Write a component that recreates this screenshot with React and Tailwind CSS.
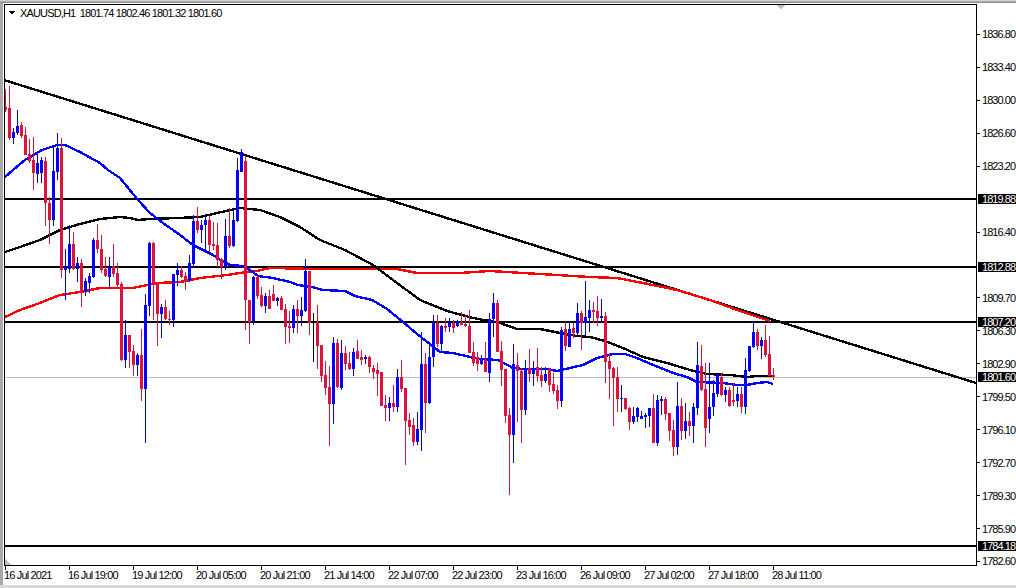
const C = [
[0,89,107,110,112],[0,86,108,138,140],[1,128,132,138,144],[1,110,126,133,135],[0,122,125,136,138],[0,127,135,155,155],[0,139,154,161,163],[0,137,160,173,190],[1,154,163,174,183],[1,157,160,173,183],
[0,157,161,203,226],[0,197,203,220,244],[1,146,171,220,226],[1,133,148,172,180],[0,138,148,270,278],[1,249,267,270,300],[1,225,244,269,273],[0,232,244,269,270],[1,257,263,269,282],[0,259,263,292,307],
[1,278,281,292,296],[1,273,276,283,293],[1,238,240,277,278],[0,224,240,249,253],[0,235,249,270,273],[0,257,269,276,277],[1,257,267,277,287],[0,244,266,274,277],[0,263,273,285,289],[0,282,284,360,361],
[1,320,335,360,368],[0,335,335,352,368],[0,345,351,365,376],[1,353,355,365,376],[0,329,355,389,401],[1,294,305,389,443],[1,242,243,306,316],[0,242,243,283,320],[0,282,283,314,346],[1,304,307,314,338],
[0,300,307,319,320],[0,311,319,320,325],[1,274,274,320,327],[1,263,270,275,286],[0,266,270,277,278],[0,272,276,281,290],[1,255,263,281,282],[1,215,221,264,267],[0,207,221,230,233],[1,220,225,230,243],
[1,215,220,225,250],[0,215,220,245,252],[0,222,244,246,250],[0,223,245,260,267],[0,258,259,267,279],[1,219,236,266,270],[0,208,236,246,248],[1,210,220,246,247],[1,158,170,221,222],[1,149,152,172,172],
[0,156,161,300,330],[0,300,300,322,344],[1,276,277,321,325],[0,276,277,296,299],[0,287,295,306,307],[1,293,296,306,313],[0,290,296,309,309],[0,285,294,301,301],[1,297,298,301,306],[0,296,298,310,310],
[0,304,309,327,344],[0,311,326,328,343],[1,305,309,328,333],[0,300,309,316,333],[1,297,310,316,326],[1,259,271,311,312],[0,271,271,323,335],[2,313,322,322,362],[0,305,322,346,369],[0,345,345,376,382],
[0,361,375,388,395],[0,366,387,404,446],[1,337,343,404,424],[0,339,343,387,388],[1,340,353,388,390],[0,346,353,364,370],[0,352,363,369,370],[1,348,352,369,376],[0,340,351,359,359],[0,350,357,360,365],
[1,355,357,359,364],[0,356,357,367,373],[0,365,368,372,379],[0,363,370,374,396],[0,372,372,406,406],[0,395,405,408,421],[1,397,403,408,421],[0,385,403,407,412],[1,369,377,407,412],[0,360,377,389,392],
[0,388,388,421,465],[0,413,420,427,435],[0,418,425,442,446],[1,412,429,442,445],[1,332,364,430,451],[0,353,364,403,433],[1,345,357,403,404],[1,315,323,357,367],[0,315,323,344,347],[1,325,326,344,351],
[0,318,326,328,332],[1,318,323,327,332],[0,320,323,328,333],[1,320,322,326,327],[0,312,322,325,325],[0,315,324,326,327],[0,310,326,353,353],[0,342,352,363,366],[0,352,357,364,371],[1,355,359,364,365],
[0,342,360,372,372],[1,313,319,373,382],[1,293,303,319,337],[0,300,303,352,352],[0,341,351,370,386],[0,369,369,416,423],[0,408,415,435,495],[1,344,364,435,463],[0,353,365,371,422],[0,368,371,410,443],
[1,360,369,410,415],[0,349,368,374,382],[1,361,368,374,386],[0,348,367,376,382],[0,367,375,381,387],[1,367,374,381,383],[0,368,369,385,392],[0,373,384,391,394],[0,385,390,401,409],[1,327,330,401,407],
[0,322,329,346,351],[1,322,329,347,347],[0,323,328,333,338],[1,303,313,333,335],[0,311,313,323,350],[1,281,317,323,335],[1,300,310,318,332],[0,302,310,312,323],[0,296,311,318,326],[1,299,316,318,323],
[0,312,316,362,383],[0,353,361,369,399],[0,367,368,378,426],[0,367,377,399,412],[1,385,398,399,412],[0,398,398,409,410],[0,407,408,422,430],[1,407,416,422,424],[1,407,408,417,422],[1,411,416,419,419],
[1,413,415,417,428],[1,408,408,416,427],[0,394,408,443,443],[1,395,400,443,446],[1,396,399,401,415],[0,397,399,414,420],[0,413,413,431,441],[0,420,430,447,456],[1,382,406,447,455],[0,398,406,431,440],
[1,403,421,431,439],[0,412,421,426,436],[1,403,407,426,443],[1,342,365,408,415],[0,345,366,390,391],[0,363,389,428,447],[1,363,407,419,433],[1,380,393,407,416],[1,374,375,394,397],[0,373,377,395,396],
[1,387,390,395,402],[0,387,390,406,407],[0,383,400,402,406],[1,387,394,401,407],[0,387,394,407,413],[1,358,370,407,414],[1,346,346,371,372],[1,322,332,347,348],[0,329,332,346,350],[1,337,340,346,359],
[0,325,340,355,357],[0,336,354,376,376],[0,368,375,377,380],
];
const FILL = ["#dc143c", "#0000ff", "#000000"];
const BLUE = "5,177 13,170 25,160 42,150 57,145 65,145 80,152 100,163 108,170 120,178 138,200 150,213 163,223 180,235 193,245 213,255 222,261 230,265 242,266 250,270 258,276 273,278 290,282 298,285 312,287 323,290 345,291 355,296 372,300 387,309 403,322 417,334 430,344 440,352 453,353 470,357 480,359 498,360 513,368 523,369 547,369 557,371 570,368 583,365 597,358 613,354 625,354 637,358 653,365 673,373 687,377 697,382 723,383 737,385 747,385 757,383 767,382 773,384";
const BLACK = "5,252 20,247 40,240 60,230 80,224 100,219 120,217 130,218 138,220 150,219 177,218 200,217 217,213 240,208 260,210 280,217 300,227 320,240 345,250 373,265 393,280 420,300 447,311 473,318 500,323 517,329 540,329 560,333 577,336 590,337 605,341 623,348 643,357 667,363 690,370 707,374 730,375 747,377 757,376 773,376";
const RED = "5,317 20,310 40,303 60,295 80,292 100,288 133,288 157,283 180,282 200,278 227,275 240,273 257,271 270,268 317,269 347,269 397,269 417,273 460,273 490,271 540,274 590,277 617,278 643,283 677,290 710,300 740,311 770,321";
const HLINES = [199, 267, 322, 546];
const PRICES = ["1836.80","1833.40","1830.00","1826.60","1823.20","","1816.40","","1809.70","1806.30","1802.90","1799.50","1796.10","1792.70","1789.30","1785.90","1782.60"];
const TAGS = [["1819.88",199],["1812.88",267],["1807.20",322],["1801.60",377],["1784.18",546]];
const TIMES = ["16 Jul 2021","16 Jul 19:00","19 Jul 12:00","20 Jul 05:00","20 Jul 21:00","21 Jul 14:00","22 Jul 07:00","22 Jul 23:00","23 Jul 16:00","26 Jul 09:00","27 Jul 02:00","27 Jul 18:00","28 Jul 11:00"];

function Chart() {
  return (
    <svg className="block w-[971px] h-[560px]" viewBox="5 5 971 560" shapeRendering="crispEdges">
      {HLINES.map((y) => <rect key={y} x="5" y={y - 1} width="971" height="2" fill="#000" />)}
      <rect x="5" y="377" width="971" height="1" fill="#c0c0c0" />
      <line x1="4" y1="80" x2="976" y2="383" stroke="#000" strokeWidth="2.4" />
      <polyline points={RED} fill="none" stroke="#ff0000" strokeWidth="2.4" />
      <polyline points={BLACK} fill="none" stroke="#000000" strokeWidth="2.4" />
      <polyline points={BLUE} fill="none" stroke="#0000ff" strokeWidth="2.4" />
      {C.map(([k, h, o, c, l], i) => (
        <g key={i} fill={FILL[k]}>
          <rect x={5 + 4 * i} y={h} width="1" height={l - h} />
          {k < 2 && <rect x={4 + 4 * i} y={o} width="3" height={Math.max(c - o, 1)} />}
        </g>
      ))}
      <polygon points="8,11 15,11 11.5,14.5" fill="#000" />
      <polygon points="776,5 785,5 780.5,9.5" fill="#c0c0c0" />
      <polygon points="5,559 5,565 11,565" fill="#c0c0c0" />
    </svg>
  );
}

export default function App() {
  return (
    <div className="w-[1016px] h-[588px] bg-white flex flex-col overflow-hidden text-[11px] leading-[11px] tracking-[-0.95px] text-black font-['Liberation_Sans',sans-serif]">
      <div className="h-[3px] bg-gradient-to-b from-[#e0e0e0] to-[#808080]" />
      <div className="flex-1 flex flex-col border-l-[3px] border-[#a9a9a9] pl-px pt-px">
        <div className="flex h-[562px]">
          <div className="relative w-[973px] h-[562px] border border-black">
            <Chart />
            <div className="absolute left-[15px] top-[3px] whitespace-pre tracking-[-0.85px]">XAUUSD,H1  1801.74 1802.46 1801.32 1801.60</div>
          </div>
          <div className="relative flex-1">
            <div className="flex flex-col pt-[14px]">
              {PRICES.map((p, i) => (
                <div key={i} className="h-[32.95px] flex items-center gap-[2px]">
                  {p && <div className="w-[3px] h-px bg-black" />}
                  {p && <span className="leading-[8px]">{p}</span>}
                </div>
              ))}
            </div>
            {TAGS.map(([p, y]) => (
              <div key={p} style={{ top: y - 9 }} className="absolute left-px right-0 h-[10px] leading-[10px] bg-black text-white pl-[4px]">{p}</div>
            ))}
          </div>
        </div>
        <div className="flex pl-px">
          {TIMES.map((t) => (
            <div key={t} className="w-[64px] shrink-0">
              <div className="w-px h-[4px] bg-black" />
              <div className="whitespace-pre -ml-px tracking-[-0.85px]">{t}</div>
            </div>
          ))}
        </div>
      </div>
      <div className="h-[3px] bg-[#d8d8d8]" />
    </div>
  );
}
